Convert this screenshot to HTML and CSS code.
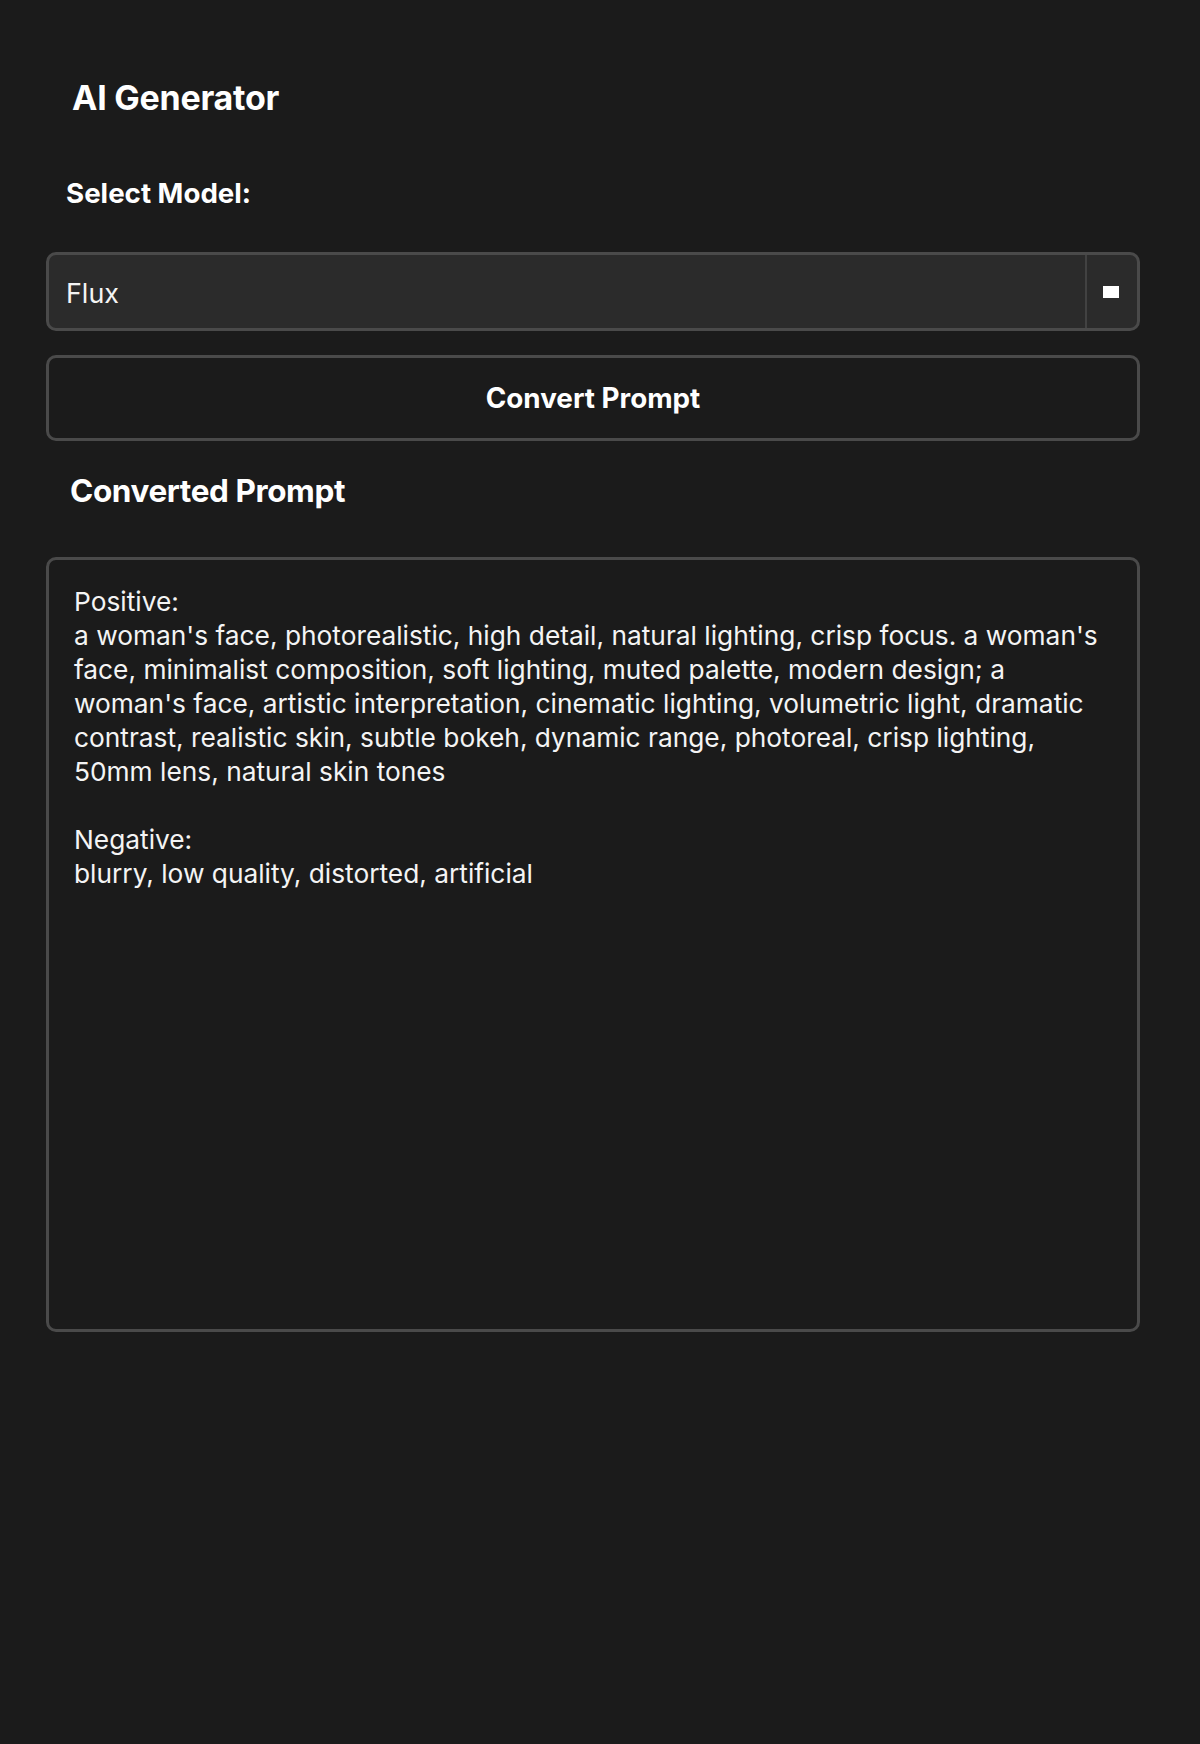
FILE: index.html
```html
<!DOCTYPE html>
<html lang="en">
<head>
<meta charset="utf-8">
<title>AI Generator</title>
<link rel="stylesheet" href="styles.css">
</head>
<body>
<main class="app">
  <h1 class="title">AI Generator</h1>
  <label class="field-label" for="model">Select Model:</label>
  <div class="select" id="model">
    <span class="select-value">Flux</span>
    <span class="select-arrow"><span class="select-mark"></span></span>
  </div>
  <button class="convert-btn" type="button">Convert Prompt</button>
  <h2 class="section-title">Converted Prompt</h2>
  <textarea class="output" readonly>Positive:
a woman's face, photorealistic, high detail, natural lighting, crisp focus. a woman's
face, minimalist composition, soft lighting, muted palette, modern design; a
woman's face, artistic interpretation, cinematic lighting, volumetric light, dramatic
contrast, realistic skin, subtle bokeh, dynamic range, photoreal, crisp lighting,
50mm lens, natural skin tones

Negative:
blurry, low quality, distorted, artificial</textarea>
</main>
</body>
</html>
```
FILE: styles.css
```css
html, body {
  margin: 0;
  padding: 0;
  background: #1b1b1b;
}

body {
  color: #ffffff;
  font-family: "Inter", "Liberation Sans", sans-serif;
  min-height: 1744px;
}

.app {
  display: flex;
  flex-direction: column;
  align-items: stretch;
  padding: 78px 60px 0 46px;
  box-sizing: border-box;
  width: 1200px;
}

.title {
  margin: 0;
  padding-left: 26px;
  font-size: 34px;
  line-height: 40px;
  font-weight: 700;
  letter-spacing: -0.25px;
}

.field-label {
  display: block;
  margin-top: 58px;
  padding-left: 20px;
  font-size: 27.7px;
  line-height: 34px;
  font-weight: 700;
}

.select {
  margin-top: 42px;
  height: 79px;
  box-sizing: border-box;
  display: flex;
  align-items: stretch;
  background: #2b2b2b;
  border: 3px solid #4a4a4a;
  border-radius: 10px;
  overflow: hidden;
}

.select-value {
  flex: 1;
  display: flex;
  align-items: center;
  padding: 2px 0 0 17px;
  font-size: 26.9px;
  line-height: 34px;
  font-weight: 400;
  color: #f4f4f4;
}

.select-arrow {
  width: 47px;
  border-left: 2px solid #424242;
  display: flex;
  align-items: center;
  justify-content: center;
  padding-right: 3px;
}

.select-mark {
  display: block;
  width: 16px;
  height: 12px;
  background: #ffffff;
}

.convert-btn {
  margin-top: 24px;
  height: 86px;
  box-sizing: border-box;
  background: #1b1b1b;
  border: 3px solid #4a4a4a;
  border-radius: 10px;
  color: #ffffff;
  font-family: "Inter", "Liberation Sans", sans-serif;
  font-size: 27.8px;
  line-height: 34px;
  font-weight: 700;
  padding: 0;
  cursor: pointer;
}

.section-title {
  margin: 31px 0 0 0;
  padding-left: 24px;
  font-size: 31.5px;
  line-height: 38px;
  font-weight: 700;
  letter-spacing: -0.4px;
}

.output {
  display: block;
  margin-top: 47px;
  height: 775px;
  box-sizing: border-box;
  width: 100%;
  background: #1b1b1b;
  border: 3px solid #4a4a4a;
  border-radius: 10px;
  color: #f4f4f4;
  font-family: "Inter", "Liberation Sans", sans-serif;
  font-size: 26.3px;
  line-height: 34px;
  padding: 25px 18px 24px 25px;
  resize: none;
  outline: none;
  overflow: hidden;
  white-space: pre;
}
```
